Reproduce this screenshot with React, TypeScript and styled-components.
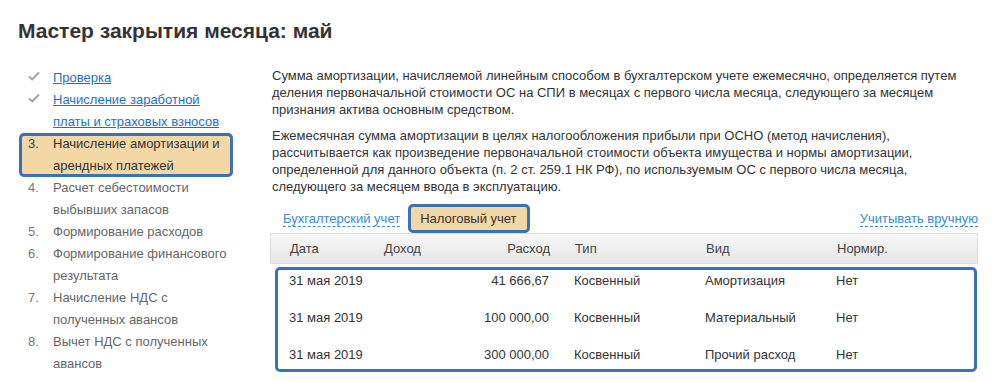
import styled, { createGlobalStyle } from "styled-components";

const GlobalStyle = createGlobalStyle`
  body {
    margin: 0;
    background: #fff;
    font-family: "Liberation Sans", Arial, sans-serif;
    color: #333;
  }
`;

const BLUE_BORDER = "#3a72b8";
const HIGHLIGHT = "#f3d7a5";

type Step = { num?: string; done?: boolean; active?: boolean; lines: string[] };

const steps: Step[] = [
  { done: true, lines: ["Проверка"] },
  { done: true, lines: ["Начисление заработной", "платы и страховых взносов"] },
  { num: "3.", active: true, lines: ["Начисление амортизации и", "арендных платежей"] },
  { num: "4.", lines: ["Расчет себестоимости", "выбывших запасов"] },
  { num: "5.", lines: ["Формирование расходов"] },
  { num: "6.", lines: ["Формирование финансового", "результата"] },
  { num: "7.", lines: ["Начисление НДС с", "полученных авансов"] },
  { num: "8.", lines: ["Вычет НДС с полученных", "авансов"] },
];

const rows = [
  { date: "31 мая 2019", income: "", expense: "41 666,67", type: "Косвенный", kind: "Амортизация", norm: "Нет" },
  { date: "31 мая 2019", income: "", expense: "100 000,00", type: "Косвенный", kind: "Материальный", norm: "Нет" },
  { date: "31 мая 2019", income: "", expense: "300 000,00", type: "Косвенный", kind: "Прочий расход", norm: "Нет" },
];

const CheckIcon = () => (
  <svg width="12" height="10" viewBox="0 0 12 10">
    <path d="M1 5.5 L4.2 8.5 L11 1.5" fill="none" stroke="#a0a0a0" strokeWidth="1.8" />
  </svg>
);

const App = () => {
  return (
    <>
      <GlobalStyle />
      <Page>
        <Title>Мастер закрытия месяца: май</Title>
        <Columns>
          <Nav>
            {steps.map((step, i) => (
              <NavItem key={i} $active={step.active}>
                <Marker $active={step.active}>{step.done ? <CheckIcon /> : step.num}</Marker>
                <NavLabel $done={step.done} $active={step.active}>
                  {step.lines.map((line, j) => (
                    <span key={j}>{line}</span>
                  ))}
                </NavLabel>
              </NavItem>
            ))}
          </Nav>
          <Content>
            <Paragraph>
              Сумма амортизации, начисляемой линейным способом в бухгалтерском учете ежемесячно, определяется путем
              деления первоначальной стоимости ОС на СПИ в месяцах с первого числа месяца, следующего за месяцем
              признания актива основным средством.
            </Paragraph>
            <Paragraph>
              Ежемесячная сумма амортизации в целях налогообложения прибыли при ОСНО (метод начисления),
              <br />
              рассчитывается как произведение первоначальной стоимости объекта имущества и нормы амортизации,
              <br />
              определенной для данного объекта (п. 2 ст. 259.1 НК РФ), по используемым ОС с первого числа месяца,
              <br />
              следующего за месяцем ввода в эксплуатацию.
            </Paragraph>
            <Tabs>
              <DashedLink>Бухгалтерский учет</DashedLink>
              <ActiveTab>Налоговый учет</ActiveTab>
              <Spacer />
              <DashedLink>Учитывать вручную</DashedLink>
            </Tabs>
            <HeaderRow>
              <Cell>Дата</Cell>
              <Cell>Доход</Cell>
              <Cell $right>Расход</Cell>
              <Cell $pad>Тип</Cell>
              <Cell>Вид</Cell>
              <Cell>Нормир.</Cell>
            </HeaderRow>
            <RowsBox>
              {rows.map((r, i) => (
                <DataRow key={i}>
                  <Cell>{r.date}</Cell>
                  <Cell>{r.income}</Cell>
                  <Cell $right>{r.expense}</Cell>
                  <Cell $pad>{r.type}</Cell>
                  <Cell>{r.kind}</Cell>
                  <Cell>{r.norm}</Cell>
                </DataRow>
              ))}
            </RowsBox>
          </Content>
        </Columns>
      </Page>
    </>
  );
};

export default App;

const columns = "94px 77px 89px 156px 131px 1fr";

const Page = styled.div`
  width: 993px;
  height: 382px;
  padding: 18px 0 0 18px;
  box-sizing: border-box;
  overflow: hidden;
`;

const Title = styled.h1`
  margin: 0;
  font-size: 21px;
  line-height: 26px;
  font-weight: 700;
  color: #333;
`;

const Columns = styled.div`
  display: flex;
  margin-top: 23px;
`;

const Nav = styled.div`
  width: 214px;
  margin-left: 1px;
  display: flex;
  flex-direction: column;
`;

const NavItem = styled.div<{ $active?: boolean }>`
  display: grid;
  grid-template-columns: 25px 1fr;
  padding-left: 9px;
  border-radius: 5px;
  font-size: 13px;
  line-height: 22px;
  background: ${(p) => (p.$active ? HIGHLIGHT : "transparent")};
  box-shadow: ${(p) => (p.$active ? `inset 0 0 0 3px ${BLUE_BORDER}` : "none")};
`;

const Marker = styled.div<{ $active?: boolean }>`
  color: ${(p) => (p.$active ? "#444" : "#777")};
  svg {
    display: block;
    margin-top: 4px;
  }
`;

const NavLabel = styled.div<{ $done?: boolean; $active?: boolean }>`
  display: flex;
  flex-direction: column;
  align-items: flex-start;
  color: ${(p) => (p.$done ? "#1f6fc6" : p.$active ? "#333" : "#666")};
  span {
    text-decoration: ${(p) => (p.$done ? "underline" : "none")};
  }
`;

const Content = styled.div`
  margin-left: 37px;
  width: 708px;
  display: flex;
  flex-direction: column;
`;

const Paragraph = styled.p`
  margin: 0 0 9px 2px;
  font-size: 13px;
  line-height: 17px;
  color: #333;
`;

const Tabs = styled.div`
  display: flex;
  align-items: center;
  height: 29px;
  padding-left: 13px;
  font-size: 13px;
`;

const DashedLink = styled.span`
  color: #3b8ad4;
  border-bottom: 1px dashed #3b8ad4;
  line-height: 15px;
`;

const ActiveTab = styled.span`
  margin-left: 8px;
  padding: 0 10px 0 9px;
  height: 29px;
  box-sizing: border-box;
  display: flex;
  align-items: center;
  background: ${HIGHLIGHT};
  border: 3px solid ${BLUE_BORDER};
  border-radius: 5px;
  color: #333;
`;

const Spacer = styled.div`
  flex: 1;
`;

const HeaderRow = styled.div`
  display: grid;
  grid-template-columns: ${columns};
  align-items: center;
  height: 29px;
  padding-left: 19px;
  border: 1px solid #dcdcdc;
  background: linear-gradient(#f7f7f7, #e6e6e6);
  font-size: 13px;
  color: #444;
`;

const RowsBox = styled.div`
  margin: 3px 1px 0 5px;
  padding: 3px 0 6px 11px;
  border: 3px solid ${BLUE_BORDER};
  border-radius: 5px;
  display: flex;
  flex-direction: column;
  gap: 21px;
`;

const DataRow = styled.div`
  display: grid;
  grid-template-columns: ${columns};
  font-size: 13px;
  line-height: 16px;
  color: #333;
`;

const Cell = styled.div<{ $right?: boolean; $pad?: boolean }>`
  text-align: ${(p) => (p.$right ? "right" : "left")};
  padding-left: ${(p) => (p.$pad ? "25px" : "0")};
  white-space: nowrap;
`;
